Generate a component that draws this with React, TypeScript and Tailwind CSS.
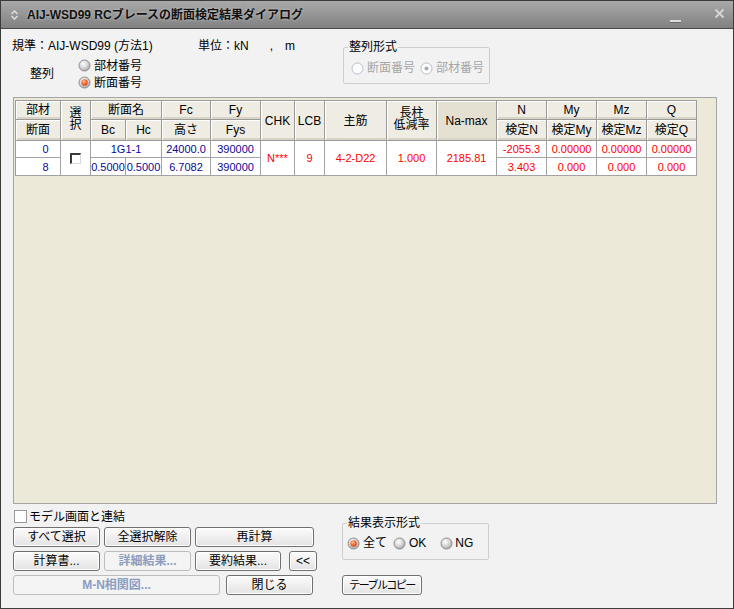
import React from "react";

const FONT = "[font-family:'Liberation_Sans','Noto_Sans_CJK_JP',sans-serif]";

function Radio({ checked = false, disabled = false }: { checked?: boolean; disabled?: boolean }) {
  if (disabled) {
    return (
      <svg width="13" height="13" viewBox="0 0 13 13" className="shrink-0">
        <circle cx="6.5" cy="6.5" r="5.5" fill="#ffffff" stroke="#b4bccb" />
        {checked && <circle cx="6.5" cy="6.5" r="2" fill="#a3aab8" />}
      </svg>
    );
  }
  return (
    <svg width="13" height="13" viewBox="0 0 13 13" className="shrink-0">
      <defs>
        <radialGradient id="rgGray" cx="40%" cy="35%" r="65%">
          <stop offset="0%" stopColor="#ffffff" />
          <stop offset="60%" stopColor="#d4d4d4" />
          <stop offset="100%" stopColor="#a8a8a8" />
        </radialGradient>
        <radialGradient id="rgOrange" cx="40%" cy="35%" r="65%">
          <stop offset="0%" stopColor="#ffc49a" />
          <stop offset="60%" stopColor="#f2692c" />
          <stop offset="100%" stopColor="#d9471a" />
        </radialGradient>
      </defs>
      <circle cx="6.5" cy="6.5" r="5.5" fill="url(#rgGray)" stroke="#8e8e8e" />
      {checked && <circle cx="6.5" cy="6.5" r="3.2" fill="url(#rgOrange)" />}
    </svg>
  );
}

function Btn({
  children,
  w,
  disabled = false,
  extra = "",
}: {
  children: React.ReactNode;
  w: string;
  disabled?: boolean;
  extra?: string;
}) {
  return (
    <div
      className={
        w +
        " h-[20px] shrink-0 rounded-[3px] border flex items-center justify-center whitespace-nowrap leading-none " +
        (extra || "text-[12px] ") +
        " " +
        (disabled
          ? "border-[#bdbdbd] bg-[#f4f4f4] text-[#8b9dc0] font-bold"
          : "border-[#707070] bg-linear-to-b from-[#fcfcfc] to-[#e3e3e3] text-black shadow-[inset_0_0_0_1px_#ffffff]")
      }
    >
      {children}
    </div>
  );
}

const H =
  "border-r border-b border-[#9a9a9a] bg-[#efede3] text-black text-[12px] leading-[12px] text-center align-middle p-0 shadow-[inset_1px_1px_0_#ffffff,inset_0_-2px_0_#d9d5c6]";
const D = "border-r border-b border-[#a3a3a3] bg-white text-[11px] leading-[12px] text-center align-middle p-0";
const B = " text-[#0a0a96]";
const R = " text-[#ff0000]";

export default function App() {
  return (
    <div
      className={
        FONT +
        " w-[734px] h-[609px] bg-[#f2f2f2] border border-[#3c3c3c] flex flex-col overflow-hidden select-none"
      }
    >
      {/* Title bar */}
      <div className="h-[28px] shrink-0 border-b border-[#4a4a4a] bg-linear-to-b from-[#a9a9a9] to-[#818181] flex items-center">
        <div className="w-[26px] flex justify-center pl-[1px]">
          <svg width="9" height="12" viewBox="0 0 9 12">
            <path d="M1.5 5 L4.5 2 L7.5 5" fill="none" stroke="#e2e2e2" strokeWidth="1.4" />
            <path d="M1.5 7 L4.5 10 L7.5 7" fill="none" stroke="#e2e2e2" strokeWidth="1.4" />
          </svg>
        </div>
        <div className="text-[12px] font-bold text-[#111] [text-shadow:0_0_3px_rgba(255,255,255,0.55)]">
          AIJ-WSD99 RCブレースの断面検定結果ダイアログ
        </div>
        <div className="flex-1" />
        <div className="w-[20px] h-[20px] flex items-end justify-center pb-[3px] mr-[26px]">
          <div className="w-[11px] h-[2px] bg-[#dcdcdc] shadow-[0_1px_0_#6a6a6a]" />
        </div>
        <div className="w-[16px] h-[16px] flex items-center justify-center mr-[6px] mb-[3px]">
          <svg width="11" height="11" viewBox="0 0 11 11">
            <path d="M1.5 1.5 L9.5 9.5 M9.5 1.5 L1.5 9.5" stroke="#d6d6d6" strokeWidth="1.8" />
          </svg>
        </div>
      </div>

      {/* Client */}
      <div className="flex-1 flex flex-col pl-[12px]">
        {/* Top section */}
        <div className="h-[68px] shrink-0 flex text-[12px] text-black">
          <div className="w-[330px] flex flex-col">
            <div className="mt-[10px] h-[14px] flex items-center leading-none -ml-[1px]">
              <span className="w-[186px]">規準：AIJ-WSD99 (方法1)</span>
              <span>単位：kN</span>
              <span className="ml-[21px]">,</span>
              <span className="ml-[12px]">m</span>
            </div>
            <div className="mt-[4px] flex items-center">
              <span className="ml-[17px] w-[48px] leading-none">整列</span>
              <div className="flex flex-col">
                <div className="h-[17px] flex items-center gap-[3px]">
                  <Radio />
                  <span className="leading-none">部材番号</span>
                </div>
                <div className="h-[17px] flex items-center gap-[3px]">
                  <Radio checked />
                  <span className="leading-none">断面番号</span>
                </div>
              </div>
            </div>
          </div>
          <fieldset className="mt-[11px] w-[147px] h-[44px] border border-[#cfcfcf] rounded-[2px] p-0 m-0">
            <legend className="ml-[4px] px-[1px] text-[12px] leading-[14px]">整列形式</legend>
            <div className="h-[28px] flex items-center pl-[7px] text-[#a6a6a6]">
              <Radio disabled />
              <span className="ml-[3px] leading-none">断面番号</span>
              <span className="ml-[5px]" />
              <Radio disabled checked />
              <span className="ml-[3px] leading-none">部材番号</span>
            </div>
          </fieldset>
        </div>

        {/* Table panel */}
        <div className="w-[704px] h-[407px] shrink-0 border border-[#a5a5a5] bg-[#ece9d8] pt-[2px] pl-[1px]">
          <table className="table-fixed border-separate border-spacing-0 border-l border-t border-[#9a9a9a] w-[682px]">
            <colgroup>
              <col className="w-[45px]" />
              <col className="w-[30px]" />
              <col className="w-[35px]" />
              <col className="w-[36px]" />
              <col className="w-[49px]" />
              <col className="w-[50px]" />
              <col className="w-[34px]" />
              <col className="w-[30px]" />
              <col className="w-[62px]" />
              <col className="w-[50px]" />
              <col className="w-[60px]" />
              <col className="w-[50px]" />
              <col className="w-[50px]" />
              <col className="w-[50px]" />
              <col className="w-[50px]" />
            </colgroup>
            <tbody>
              <tr className="h-[19px]">
                <td className={H + " h-[19px]"}>部材</td>
                <td className={H + " pb-[3px]"} rowSpan={2}>
                  選<br />択
                </td>
                <td className={H} colSpan={2}>断面名</td>
                <td className={H}>Fc</td>
                <td className={H}>Fy</td>
                <td className={H} rowSpan={2}>CHK</td>
                <td className={H} rowSpan={2}>LCB</td>
                <td className={H} rowSpan={2}>主筋</td>
                <td className={H + " pb-[3px]"} rowSpan={2}>
                  長柱<br />低減率
                </td>
                <td className={H + " !bg-[#e4e1d3]"} rowSpan={2}>Na-max</td>
                <td className={H}>N</td>
                <td className={H}>My</td>
                <td className={H}>Mz</td>
                <td className={H}>Q</td>
              </tr>
              <tr className="h-[21px]">
                <td className={H + " h-[21px]"}>断面</td>
                <td className={H}>Bc</td>
                <td className={H}>Hc</td>
                <td className={H}>高さ</td>
                <td className={H}>Fys</td>
                <td className={H}>検定N</td>
                <td className={H}>検定My</td>
                <td className={H}>検定Mz</td>
                <td className={H}>検定Q</td>
              </tr>
              <tr className="h-[17px]">
                <td className={D + B + " h-[17px] pl-[15px]"}>0</td>
                <td className={D} rowSpan={2}>
                  <div className="flex justify-center">
                    <div className="w-[11px] h-[11px] bg-white border-t-2 border-l-2 border-r border-b border-t-[#3a3a3a] border-l-[#3a3a3a] border-r-[#d8d8d8] border-b-[#d8d8d8]" />
                  </div>
                </td>
                <td className={D + B} colSpan={2}>1G1-1</td>
                <td className={D + B}>24000.0</td>
                <td className={D + B}>390000</td>
                <td className={D + R} rowSpan={2}>N***</td>
                <td className={D + R} rowSpan={2}>9</td>
                <td className={D + R} rowSpan={2}>4-2-D22</td>
                <td className={D + R} rowSpan={2}>1.000</td>
                <td className={D + R} rowSpan={2}>2185.81</td>
                <td className={D + R}>-2055.3</td>
                <td className={D + R}>0.00000</td>
                <td className={D + R}>0.00000</td>
                <td className={D + R}>0.00000</td>
              </tr>
              <tr className="h-[18px]">
                <td className={D + B + " h-[18px] pl-[15px]"}>8</td>
                <td className={D + B}>0.5000</td>
                <td className={D + B}>0.5000</td>
                <td className={D + B}>6.7082</td>
                <td className={D + B}>390000</td>
                <td className={D + R}>3.403</td>
                <td className={D + R}>0.000</td>
                <td className={D + R}>0.000</td>
                <td className={D + R}>0.000</td>
              </tr>
            </tbody>
          </table>
        </div>

        {/* Bottom section */}
        <div className="flex text-[12px] text-black">
          <div className="w-[301px] flex flex-col">
            <div className="mt-[6px] h-[13px] flex items-center ml-[1px]">
              <div className="w-[13px] h-[13px] border border-[#9a9a9a] bg-white" />
              <span className="ml-[2px] leading-none">モデル画面と連結</span>
            </div>
            <div className="mt-[4px] flex gap-[4px]">
              <Btn w="w-[87px]">すべて選択</Btn>
              <Btn w="w-[87px]">全選択解除</Btn>
              <Btn w="w-[119px]">再計算</Btn>
            </div>
            <div className="mt-[4px] flex gap-[4px]">
              <Btn w="w-[87px]">計算書...</Btn>
              <Btn w="w-[87px]" disabled>
                詳細結果...
              </Btn>
              <Btn w="w-[86px]">要約結果...</Btn>
              <div className="w-[1px]" />
              <Btn w="w-[28px]">&lt;&lt;</Btn>
            </div>
            <div className="mt-[4px] flex gap-[6px]">
              <Btn w="w-[207px]" disabled>
                M-N相関図...
              </Btn>
              <Btn w="w-[87px]">閉じる</Btn>
            </div>
          </div>
          <div className="ml-[28px] flex flex-col">
            <fieldset className="mt-[12px] w-[147px] border border-[#cfcfcf] rounded-[2px] p-0 m-0 pb-[3px]">
              <legend className="ml-[4px] px-[1px] text-[12px] leading-[14px]">結果表示形式</legend>
              <div className="h-[26px] flex items-center pl-[4px]">
                <Radio checked />
                <span className="ml-[3px] leading-none">全て</span>
                <span className="ml-[6px]" />
                <Radio />
                <span className="ml-[3px] leading-none">OK</span>
                <span className="ml-[14px]" />
                <Radio />
                <span className="ml-[2px] leading-none">NG</span>
              </div>
            </fieldset>
            <div className="mt-[15px]">
              <Btn w="w-[80px]" extra="text-[11px] tracking-[-1.5px]">
                テーブルコピー
              </Btn>
            </div>
          </div>
        </div>
      </div>
    </div>
  );
}
